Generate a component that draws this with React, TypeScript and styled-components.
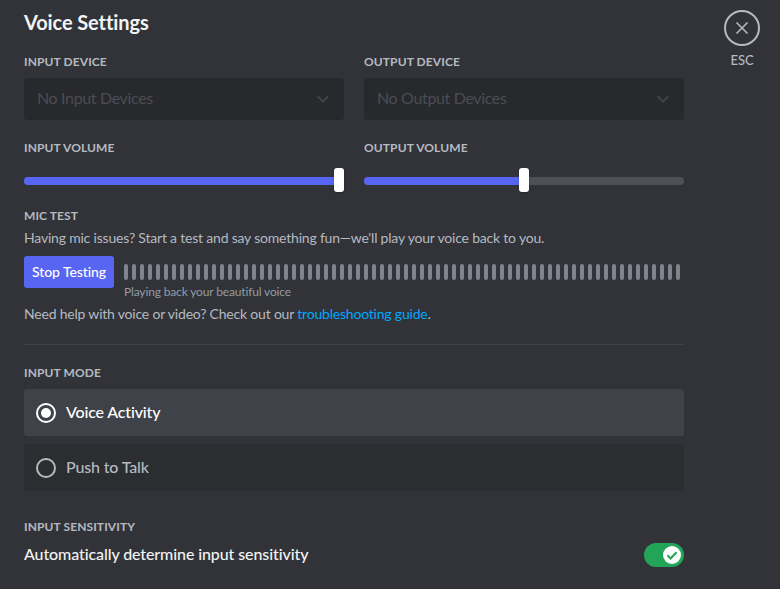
import React from 'react'
import styled, { createGlobalStyle } from 'styled-components'

const GlobalStyle = createGlobalStyle`
  html, body {
    margin: 0;
    padding: 0;
    height: 100%;
    background: #313338;
    overflow: hidden;
  }
  body {
    font-family: Lato, 'Noto Sans', sans-serif;
  }
`

const Page = styled.div`
  display: flex;
  align-items: flex-start;
  height: 589px;
  padding: 0 20px 0 24px;
  box-sizing: border-box;
  background: #313338;
`

const Content = styled.main`
  width: 660px;
  flex: none;
`

const Title = styled.h1`
  margin: 0;
  padding-top: 10px;
  font-size: 20px;
  line-height: 24px;
  font-weight: 700;
  letter-spacing: -0.1px;
  color: #f2f3f5;
`

const Columns = styled.div`
  display: grid;
  grid-template-columns: 320px 320px;
  column-gap: 20px;
`

const Label = styled.h2<{ $top: number; $bottom: number }>`
  margin: ${p => p.$top}px 0 ${p => p.$bottom}px;
  font-size: 12px;
  line-height: 16px;
  font-weight: 700;
  letter-spacing: 0.1px;
  color: #b5bac1;
`

const Select = styled.div`
  display: flex;
  align-items: center;
  justify-content: space-between;
  height: 42px;
  padding: 0 12px 0 13px;
  border-radius: 4px;
  background: #28292d;
  color: #4b4d53;
  font-size: 16px;
  letter-spacing: -0.35px;
`

const SelectText = styled.span`
  padding-bottom: 4px;
`

const SliderTrack = styled.div`
  position: relative;
  height: 8px;
  margin-top: 21px;
  border-radius: 4px;
  background: #4e5058;
`

const SliderFill = styled.div`
  height: 100%;
  border-radius: 4px;
  background: #5865f2;
`

const SliderHandle = styled.div`
  position: absolute;
  top: -9px;
  width: 10px;
  height: 24px;
  border-radius: 3px;
  background: #fff;
  box-shadow: 0 1px 2px rgba(0, 0, 0, 0.3);
`

const Paragraph = styled.p<{ $top: number }>`
  margin: ${p => p.$top}px 0 0;
  font-size: 14px;
  line-height: 20px;
  letter-spacing: -0.2px;
  color: #b5bac1;
`

const Link = styled.a`
  color: #00a8fc;
  text-decoration: none;
`

const TestRow = styled.div`
  display: flex;
  gap: 10px;
  margin-top: 8px;
`

const TestButton = styled.button`
  flex: none;
  width: 90px;
  height: 32px;
  padding: 0 0 2px;
  border: 0;
  border-radius: 3px;
  background: #5865f2;
  color: #fff;
  font-family: inherit;
  font-size: 14px;
  font-weight: 500;
  letter-spacing: -0.1px;
`

const Meter = styled.div`
  flex: 1;
  padding-top: 8px;
`

const Bars = styled.div`
  display: flex;
  gap: 4px;
  height: 16px;
`

const Bar = styled.span`
  width: 4px;
  border-radius: 2px;
  background: #80848e;
`

const MeterCaption = styled.div`
  margin-top: 4px;
  font-size: 12px;
  line-height: 16px;
  letter-spacing: -0.15px;
  color: #949ba4;
`

const Divider = styled.hr`
  margin: 20px 0 0;
  border: 0;
  height: 1px;
  background: #3f4147;
`

const RadioList = styled.div`
  display: flex;
  flex-direction: column;
  gap: 8px;
`

const RadioRow = styled.div<{ $selected?: boolean }>`
  display: flex;
  align-items: center;
  gap: 10px;
  height: 47px;
  padding: 0 12px;
  border-radius: 3px;
  background: ${p => (p.$selected ? '#404249' : '#2b2d31')};
  color: ${p => (p.$selected ? '#ffffff' : '#b5bac1')};
  font-size: 16px;
  font-weight: 500;
  letter-spacing: -0.15px;
`

const RadioText = styled.span`
  padding-bottom: 2px;
`

const SwitchRow = styled.div`
  display: flex;
  align-items: center;
  justify-content: space-between;
  height: 24px;
  color: #f2f3f5;
  font-size: 16px;
  font-weight: 500;
  letter-spacing: -0.1px;
`

const SwitchText = styled.span`
  padding-bottom: 4px;
`

const Toggle = styled.div`
  display: flex;
  justify-content: flex-end;
  align-items: center;
  width: 40px;
  height: 24px;
  padding: 3px;
  box-sizing: border-box;
  border-radius: 12px;
  background: #23a559;
`

const Knob = styled.div`
  display: flex;
  align-items: center;
  justify-content: center;
  width: 18px;
  height: 18px;
  border-radius: 50%;
  background: #fff;
`

const CloseColumn = styled.aside`
  display: flex;
  flex-direction: column;
  align-items: center;
  gap: 6px;
  margin: 10px 0 0 40px;
`

const CloseButton = styled.div`
  display: flex;
  align-items: center;
  justify-content: center;
  width: 36px;
  height: 36px;
  box-sizing: border-box;
  border: 2px solid #b5bac1;
  border-radius: 50%;
`

const CloseHint = styled.div`
  font-size: 13px;
  line-height: 16px;
  font-weight: 500;
  color: #b5bac1;
`

const Chevron = () => (
  <svg width="18" height="18" viewBox="0 0 24 24" fill="none">
    <path d="M5 8.5l7 7 7-7" stroke="#46484e" strokeWidth="2.2" />
  </svg>
)

const Radio = ({ checked }: { checked?: boolean }) => (
  <svg width="20" height="20" viewBox="0 0 20 20" fill="none">
    <circle cx="10" cy="10" r="9" stroke={checked ? '#fff' : '#b5bac1'} strokeWidth="2" />
    {checked && <circle cx="10" cy="10" r="5" fill="#fff" />}
  </svg>
)

export default function App() {
  return (
    <Page>
      <GlobalStyle />
      <Content>
        <Title>Voice Settings</Title>
        <Columns>
          <div>
            <Label $top={20} $bottom={8}>INPUT DEVICE</Label>
            <Select>
              <SelectText>No Input Devices</SelectText>
              <Chevron />
            </Select>
            <Label $top={20} $bottom={0}>INPUT VOLUME</Label>
            <SliderTrack>
              <SliderFill style={{ width: '100%' }} />
              <SliderHandle style={{ left: 310 }} />
            </SliderTrack>
          </div>
          <div>
            <Label $top={20} $bottom={8}>OUTPUT DEVICE</Label>
            <Select>
              <SelectText>No Output Devices</SelectText>
              <Chevron />
            </Select>
            <Label $top={20} $bottom={0}>OUTPUT VOLUME</Label>
            <SliderTrack>
              <SliderFill style={{ width: '50%' }} />
              <SliderHandle style={{ left: 155 }} />
            </SliderTrack>
          </div>
        </Columns>
        <Label $top={23} $bottom={0}>MIC TEST</Label>
        <Paragraph $top={4}>
          Having mic issues? Start a test and say something fun—we'll play your voice back to you.
        </Paragraph>
        <TestRow>
          <TestButton>Stop Testing</TestButton>
          <Meter>
            <Bars>
              {Array.from({ length: 70 }, (_, i) => (
                <Bar key={i} />
              ))}
            </Bars>
            <MeterCaption>Playing back your beautiful voice</MeterCaption>
          </Meter>
        </TestRow>
        <Paragraph $top={4}>
          Need help with voice or video? Check out our <Link>troubleshooting guide</Link>.
        </Paragraph>
        <Divider />
        <Label $top={20} $bottom={8}>INPUT MODE</Label>
        <RadioList>
          <RadioRow $selected>
            <Radio checked />
            <RadioText>Voice Activity</RadioText>
          </RadioRow>
          <RadioRow>
            <Radio />
            <RadioText>Push to Talk</RadioText>
          </RadioRow>
        </RadioList>
        <Label $top={28} $bottom={8}>INPUT SENSITIVITY</Label>
        <SwitchRow>
          <SwitchText>Automatically determine input sensitivity</SwitchText>
          <Toggle>
            <Knob>
              <svg width="14" height="14" viewBox="0 0 20 20" fill="none">
                <path d="M3.5 10.5l4.5 4.5 8.5-9" stroke="#23a559" strokeWidth="3" />
              </svg>
            </Knob>
          </Toggle>
        </SwitchRow>
      </Content>
      <CloseColumn>
        <CloseButton>
          <svg width="18" height="18" viewBox="0 0 18 18" fill="none">
            <path d="M3.5 3.5l11 11M14.5 3.5l-11 11" stroke="#b5bac1" strokeWidth="1.6" />
          </svg>
        </CloseButton>
        <CloseHint>ESC</CloseHint>
      </CloseColumn>
    </Page>
  )
}
